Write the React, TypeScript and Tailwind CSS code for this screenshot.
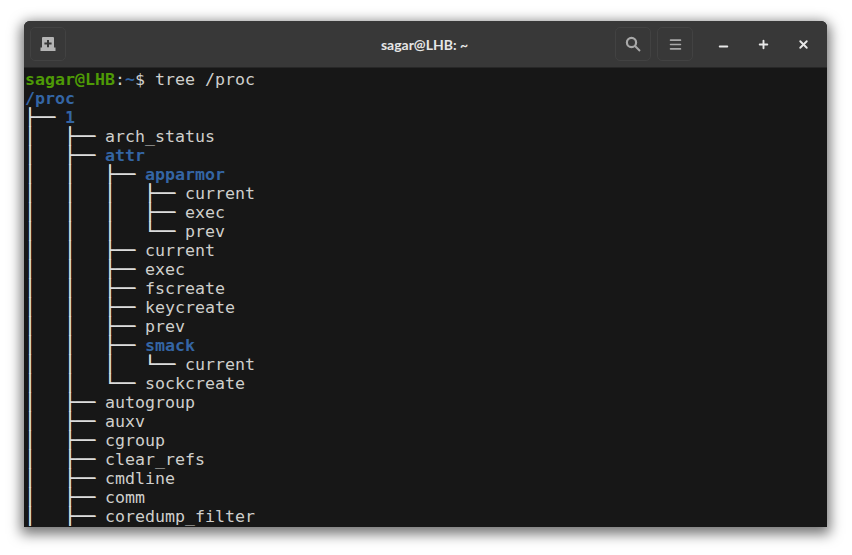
import { Menu, Minus, Plus, X } from 'lucide-react';
import { ReactNode } from 'react';

type Line = { prefix: string; name: string; kind?: 'dir' };

const lines: Line[] = [
  { prefix: '├── ', name: '1', kind: 'dir' },
  { prefix: '│   ├── ', name: 'arch_status' },
  { prefix: '│   ├── ', name: 'attr', kind: 'dir' },
  { prefix: '│   │   ├── ', name: 'apparmor', kind: 'dir' },
  { prefix: '│   │   │   ├── ', name: 'current' },
  { prefix: '│   │   │   ├── ', name: 'exec' },
  { prefix: '│   │   │   └── ', name: 'prev' },
  { prefix: '│   │   ├── ', name: 'current' },
  { prefix: '│   │   ├── ', name: 'exec' },
  { prefix: '│   │   ├── ', name: 'fscreate' },
  { prefix: '│   │   ├── ', name: 'keycreate' },
  { prefix: '│   │   ├── ', name: 'prev' },
  { prefix: '│   │   ├── ', name: 'smack', kind: 'dir' },
  { prefix: '│   │   │   └── ', name: 'current' },
  { prefix: '│   │   └── ', name: 'sockcreate' },
  { prefix: '│   ├── ', name: 'autogroup' },
  { prefix: '│   ├── ', name: 'auxv' },
  { prefix: '│   ├── ', name: 'cgroup' },
  { prefix: '│   ├── ', name: 'clear_refs' },
  { prefix: '│   ├── ', name: 'cmdline' },
  { prefix: '│   ├── ', name: 'comm' },
  { prefix: '│   ├── ', name: 'coredump_filter' },
];

function HeaderButton({ children }: { children: ReactNode }) {
  return (
    <div className="flex h-[34px] w-9 items-center justify-center rounded-[5px] border border-[#424242] bg-[#383838] text-[#a8a8a8]">
      {children}
    </div>
  );
}

function NewTabIcon() {
  return (
    <svg width="16" height="14" viewBox="0 0 16 14" fill="#b4b4b4">
      <path d="M3 0h10a1 1 0 0 1 1 1v9.5h1.5V14H.5v-3.5H2V1a1 1 0 0 1 1-1zM7 3v2.6H4.4v2H7v2.6h2V7.6h2.6v-2H9V3z" fillRule="evenodd" />
    </svg>
  );
}

function SearchIcon() {
  return (
    <svg width="16" height="16" viewBox="0 0 16 16" fill="none" stroke="#a8a8a8">
      <circle cx="6.5" cy="6.5" r="4.6" strokeWidth="2.2" />
      <path d="M10 10l5 5" strokeWidth="2" />
    </svg>
  );
}

export default function App() {
  return (
    <div className="h-[555px] w-[852px] overflow-hidden bg-white pl-[24px] pt-[21px]">
      <div className="flex h-[506px] w-[803px] flex-col overflow-hidden rounded-t-[6px] bg-[#171717] shadow-[0_4px_13px_3px_rgba(0,0,0,0.55)]">
        <header className="flex h-[47px] shrink-0 items-center border-b border-[#272727] bg-[#383838] pl-[6px] pr-[4px]">
          <HeaderButton>
            <NewTabIcon />
          </HeaderButton>
          <div className="flex-1 pl-[168px] text-center font-['Lato',sans-serif] text-[14px] font-bold text-[#e6e6e6]">
            sagar@LHB: ~
          </div>
          <div className="flex items-center gap-[6px]">
            <HeaderButton>
              <SearchIcon />
            </HeaderButton>
            <HeaderButton>
              <Menu size={15} strokeWidth={2.5} />
            </HeaderButton>
          </div>
          <div className="ml-[10px] flex w-[120px] items-center text-[#e8e8e8]">
            <div className="flex w-10 justify-center pt-[5px]">
              <Minus size={13} strokeWidth={3.5} />
            </div>
            <div className="flex w-10 justify-center">
              <Plus size={13} strokeWidth={3.5} />
            </div>
            <div className="flex w-10 justify-center">
              <X size={13} strokeWidth={3.5} />
            </div>
          </div>
        </header>
        <main className="whitespace-pre pl-[1px] pt-[2px] font-['DejaVu_Sans_Mono',monospace] text-[16.6px] leading-[19px] tracking-[0.007px] text-[#cfcfcc]">
          <div>
            <span className="font-bold text-[#4e9a06]">sagar@LHB</span>
            <span>:</span>
            <span className="font-bold text-[#3465a4]">~</span>
            <span>$ tree /proc</span>
          </div>
          <div className="font-bold text-[#3465a4]">/proc</div>
          {lines.map((line, i) => (
            <div key={i}>
              <span className="text-[#dcdcdc] [text-shadow:0.5px_0_0_#dcdcdc]">{line.prefix}</span>
              <span className={line.kind === 'dir' ? 'font-bold text-[#3465a4]' : ''}>{line.name}</span>
            </div>
          ))}
        </main>
      </div>
    </div>
  );
}
